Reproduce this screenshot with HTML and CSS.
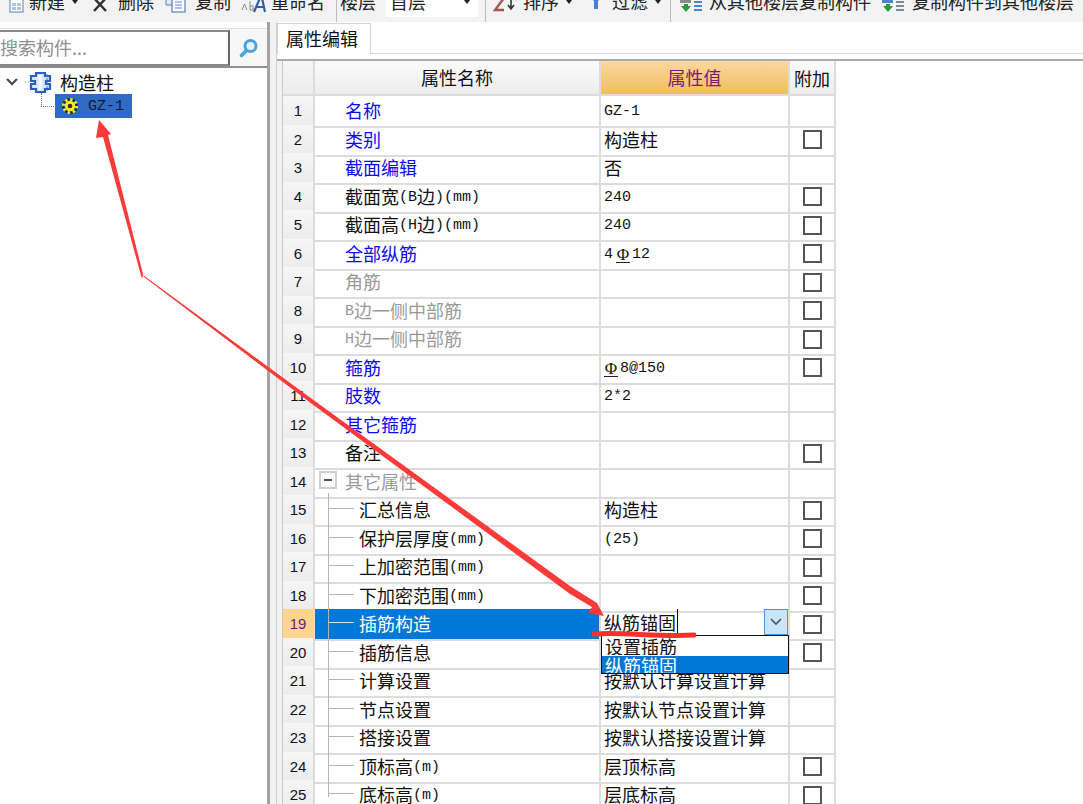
FILE: index.html
```html
<!DOCTYPE html>
<html lang="zh">
<head>
  <meta charset="UTF-8" />
  <title>属性编辑</title>
  <link rel="stylesheet" href="styles.css">
</head>
<body>
  <div class="toolbar">
    <div class="tb-item tb-new">
      <svg width="15" height="16" viewBox="0 0 15 16"><rect x="1" y="0" width="13" height="15" fill="#fff" stroke="#5b7fb5"/><rect x="3" y="6" width="9" height="7" fill="#a9c4e6"/><path d="M3 9.5H12M7.5 6V13" stroke="#fff"/></svg>
      <span>新建</span><i class="caret"></i>
    </div>
    <div class="tb-item tb-del">
      <svg width="18" height="16" viewBox="0 0 18 16"><path d="M2 0L15 14M16 0L3 14" stroke="#333" stroke-width="2.5"/></svg>
      <span>删除</span>
    </div>
    <div class="tb-item tb-copy">
      <svg width="21" height="16" viewBox="0 0 21 16"><path d="M1 0H10V8H1Z" fill="#dfe9f7" stroke="#5b7fb5"/><rect x="7" y="1" width="13" height="14" fill="#fff" stroke="#3c68a8"/><path d="M10 5H17M10 8H17M10 11H17" stroke="#5b86c6"/></svg>
      <span>复制</span>
    </div>
    <div class="tb-item tb-rename">
      <svg width="25" height="16" viewBox="0 0 25 16"><path d="M1 13L3.5 7L6 13M9 4V13H12V9H9" fill="none" stroke="#888"/><path d="M13 15L19 1H21L24 15M16 10H23" fill="none" stroke="#2b5fb0" stroke-width="2.2"/></svg>
      <span>重命名</span>
    </div>
    <i class="tb-sep tb-sep-rename"></i>
    <span class="tb-floor">楼层</span>
    <div class="tb-combo"><span>首层</span><i class="caret"></i></div>
    <i class="tb-sep tb-sep-combo"></i>
    <div class="tb-item tb-sort">
      <svg width="24" height="16" viewBox="0 0 24 16"><path d="M2 1H11L2 13H11" fill="none" stroke="#a65555" stroke-width="2.4"/><path d="M18 0V11M15 8L18 12L21 8" fill="none" stroke="#333" stroke-width="1.6"/></svg>
      <span>排序</span><i class="caret"></i>
    </div>
    <div class="tb-item tb-filter">
      <svg width="14" height="16" viewBox="0 0 14 16"><path d="M1 0H13L9 4V12H5V4Z" fill="#4b7fd0"/></svg>
      <span>过滤</span><i class="caret"></i>
    </div>
    <i class="tb-sep tb-sep-filter"></i>
    <div class="tb-item tb-from">
      <svg width="24" height="16" viewBox="0 0 24 16"><rect x="1" y="0" width="11" height="6" fill="#8a8a8a"/><path d="M5 7V9H2L7 15L12 9H9V7Z" fill="#2a9a3c"/><path d="M15 1H23M15 5H23M15 9H23M15 13H23" stroke="#4a86d0" stroke-width="2.2"/></svg>
      <span>从其他楼层复制构件</span>
    </div>
    <div class="tb-item tb-to">
      <svg width="24" height="16" viewBox="0 0 24 16"><rect x="1" y="0" width="11" height="6" fill="#4a86d0"/><path d="M5 7V9H2L7 15L12 9H9V7Z" fill="#2a9a3c"/><path d="M15 1H23M15 5H23M15 9H23M15 13H23" stroke="#808890" stroke-width="2.2"/></svg>
      <span>复制构件到其他楼层</span>
    </div>
  </div>

  <div class="main">
    <div class="left-panel">
      <div class="search-bar">
        <div class="search-input">搜索构件...</div>
        <div class="search-btn">
          <svg width="20" height="20" viewBox="0 0 20 20"><circle cx="11.5" cy="8" r="5.5" fill="#e8f4fc" stroke="#45a5dc" stroke-width="3"/><path d="M7.5 12.5L2.5 17.5" stroke="#45a5dc" stroke-width="3.5" stroke-linecap="round"/></svg>
        </div>
      </div>
      <div class="tree">
        <div class="tree-root">
          <svg width="56" height="24" viewBox="0 0 56 24">
            <path d="M7 9L12 14L17 9" fill="none" stroke="#444" stroke-width="2"/>
            <path d="M25 12H31" stroke="#999" stroke-dasharray="1 2"/>
            <path d="M36 3H45V6H50V11H46V14H50V19H45V22H36V19H31V14H35V11H31V6H36Z" fill="#d6e6fb" stroke="#2f5fc0" stroke-width="2.2"/>
            <path d="M40 5V20" stroke="#fff" stroke-width="3"/>
            <path d="M47 4V21" stroke="#5d6f8f" stroke-dasharray="2 2"/>
          </svg>
          <span>构造柱</span>
        </div>
        <div class="tree-leaf">
          <svg width="16" height="16" viewBox="0 0 16 16">
            <circle cx="8" cy="8" r="6.6" fill="none" stroke="#1c2430" stroke-width="2.8" stroke-dasharray="2 3.2" stroke-dashoffset="2.6"/>
            <circle cx="8" cy="8" r="6.6" fill="none" stroke="#f8ec1e" stroke-width="2.8" stroke-dasharray="2.2 3"/>
            <circle cx="8" cy="8" r="5.2" fill="#f8ec1e"/>
            <circle cx="8" cy="8" r="2.3" fill="#2c2f35"/>
          </svg>
          <span class="en">GZ-1</span>
        </div>
      </div>
    </div>
    <div class="splitter"></div>
    <div class="right-panel">
      <div class="tab-strip"><div class="tab">属性编辑</div></div>
      <div class="grid-wrap">
        <div class="grid">
          <div class="row head">
            <div class="num"></div>
            <div class="name">属性名称</div>
            <div class="val">属性值</div>
            <div class="add">附加</div>
          </div>
          <div class="row"><div class="num">1</div><div class="name blue">名称</div><div class="val"><span class="en">GZ-1</span></div><div class="add"></div></div>
          <div class="row"><div class="num">2</div><div class="name blue">类别</div><div class="val">构造柱</div><div class="add"><i class="check"></i></div></div>
          <div class="row"><div class="num">3</div><div class="name blue">截面编辑</div><div class="val">否</div><div class="add"></div></div>
          <div class="row"><div class="num">4</div><div class="name">截面宽<span class="en">(B</span>边<span class="en">)(mm)</span></div><div class="val"><span class="en">240</span></div><div class="add"><i class="check"></i></div></div>
          <div class="row"><div class="num">5</div><div class="name">截面高<span class="en">(H</span>边<span class="en">)(mm)</span></div><div class="val"><span class="en">240</span></div><div class="add"><i class="check"></i></div></div>
          <div class="row"><div class="num">6</div><div class="name blue">全部纵筋</div><div class="val"><span class="en">4</span><span class="rebar">Φ</span><span class="en">12</span></div><div class="add"><i class="check"></i></div></div>
          <div class="row"><div class="num">7</div><div class="name gray">角筋</div><div class="val"></div><div class="add"><i class="check"></i></div></div>
          <div class="row"><div class="num">8</div><div class="name gray"><span class="en">B</span>边一侧中部筋</div><div class="val"></div><div class="add"><i class="check"></i></div></div>
          <div class="row"><div class="num">9</div><div class="name gray"><span class="en">H</span>边一侧中部筋</div><div class="val"></div><div class="add"><i class="check"></i></div></div>
          <div class="row"><div class="num">10</div><div class="name blue">箍筋</div><div class="val"><span class="rebar">Φ</span><span class="en">8@150</span></div><div class="add"><i class="check"></i></div></div>
          <div class="row"><div class="num">11</div><div class="name blue">肢数</div><div class="val"><span class="en">2*2</span></div><div class="add"></div></div>
          <div class="row"><div class="num">12</div><div class="name blue">其它箍筋</div><div class="val"></div><div class="add"></div></div>
          <div class="row"><div class="num">13</div><div class="name">备注</div><div class="val"></div><div class="add"><i class="check"></i></div></div>
          <div class="row"><div class="num">14</div><div class="name gray group"><i class="minus"></i>其它属性</div><div class="val"></div><div class="add"></div></div>
          <div class="row"><div class="num">15</div><div class="name child">汇总信息</div><div class="val">构造柱</div><div class="add"><i class="check"></i></div></div>
          <div class="row"><div class="num">16</div><div class="name child">保护层厚度<span class="en">(mm)</span></div><div class="val"><span class="en">(25)</span></div><div class="add"><i class="check"></i></div></div>
          <div class="row"><div class="num">17</div><div class="name child">上加密范围<span class="en">(mm)</span></div><div class="val"></div><div class="add"><i class="check"></i></div></div>
          <div class="row"><div class="num">18</div><div class="name child">下加密范围<span class="en">(mm)</span></div><div class="val"></div><div class="add"><i class="check"></i></div></div>
          <div class="row active">
            <div class="num">19</div>
            <div class="name child">插筋构造</div>
            <div class="val"><span class="edit-text">纵筋锚固</span>
              <div class="drop-btn"><svg width="14" height="10" viewBox="0 0 14 10"><path d="M2 2L7 7L12 2" fill="none" stroke="#456" stroke-width="1.6"/></svg></div>
              <div class="drop-list">
                <div class="drop-item">设置插筋</div>
                <div class="drop-item selected">纵筋锚固</div>
              </div>
            </div>
            <div class="add"><i class="check"></i></div>
          </div>
          <div class="row"><div class="num">20</div><div class="name child">插筋信息</div><div class="val"></div><div class="add"><i class="check"></i></div></div>
          <div class="row"><div class="num">21</div><div class="name child">计算设置</div><div class="val">按默认计算设置计算</div><div class="add"></div></div>
          <div class="row"><div class="num">22</div><div class="name child">节点设置</div><div class="val">按默认节点设置计算</div><div class="add"></div></div>
          <div class="row"><div class="num">23</div><div class="name child">搭接设置</div><div class="val">按默认搭接设置计算</div><div class="add"></div></div>
          <div class="row"><div class="num">24</div><div class="name child">顶标高<span class="en">(m)</span></div><div class="val">层顶标高</div><div class="add"><i class="check"></i></div></div>
          <div class="row"><div class="num">25</div><div class="name child last">底标高<span class="en">(m)</span></div><div class="val">层底标高</div><div class="add"><i class="check"></i></div></div>
        </div>
      </div>
    </div>
  </div>

  <!-- annotation drawn over the screenshot -->
  <svg class="markup" width="1083" height="804" viewBox="0 0 1083 804">
    <path d="M99 120L111 134L108 135L143 274L142 279L103 137L96 138Z" fill="#fb3a3a"/>
    <path d="M143 275L310 397.5L570 586L597 603L604 616L588 613L592 607L570 594L310 402.5L144 277Z" fill="#fb3a3a"/>
    <path d="M594 634C620 632 660 637 694 635" fill="none" stroke="#fb2f2f" stroke-width="5" stroke-linecap="round"/>
  </svg>
</body>
</html>
```

FILE: styles.css
```css
html, body {
  margin: 0;
  padding: 0;
  height: 100%;
  overflow: hidden;
}

body {
  position: relative;
  background: #fff;
  font-family: "Noto Sans CJK SC", "Liberation Sans", sans-serif;
  font-size: 18px;
  color: #111;
}

.en {
  font-family: "Liberation Mono", "Noto Sans CJK SC", monospace;
  font-size: 15px;
  line-height: 1;
  vertical-align: 3px;
}

.rebar {
  display: inline-block;
  width: 14px;
  margin: 0 2px 0 3px;
  border-bottom: 1px solid #222;
  font-family: "Liberation Serif", serif;
  font-size: 17px;
  line-height: 15px;
  text-align: center;
  vertical-align: 1px;
}

.rebar:first-child {
  margin-left: 0;
}

/* toolbar, its text is cut by the top of the picture */
.toolbar {
  height: 22px;
  box-sizing: border-box;
  padding-bottom: 9px;
  background: #f3f3f3;
  display: flex;
  align-items: flex-end;
  overflow: hidden;
  font-size: 18px;
  line-height: 20px;
  color: #222;
}

.tb-item {
  display: flex;
  align-items: flex-end;
  gap: 4px;
  flex: none;
}

.tb-item svg {
  flex: none;
}

.tb-item span {
  margin-bottom: 2px;
}

.tb-new { margin-left: 9px; }
.tb-new span { margin-left: 1px; }
.tb-del { margin-left: 13px; }
.tb-del span { margin-left: 5px; }
.tb-copy { margin-left: 11px; }
.tb-copy span { margin-left: 5px; }
.tb-rename { margin-left: 10px; }
.tb-rename span { margin-left: 1px; }
.tb-sort { margin-left: 7px; }
.tb-sort span { margin-left: 2px; }
.tb-filter { margin-left: 17px; }
.tb-filter span { margin-left: 5px; }
.tb-from { margin-left: 8px; }
.tb-from span { margin-left: 2px; }
.tb-to { margin-left: 10px; }
.tb-to span { margin-left: 3px; }

.caret {
  width: 0;
  height: 0;
  margin: 0 0 9px 3px;
  border: 3px solid transparent;
  border-top: 4px solid #222;
  border-bottom: 0;
}

.tb-sep {
  width: 1px;
  height: 22px;
  margin-bottom: -9px;
  background: #bbb;
  flex: none;
}

.tb-sep-rename { margin-left: 11px; }
.tb-sep-combo { margin-left: 7px; }
.tb-sep-filter { margin-left: 9px; }

.tb-floor {
  margin: 0 0 2px 3px;
  flex: none;
}

.tb-combo {
  width: 92px;
  height: 30px;
  box-sizing: border-box;
  margin-left: 10px;
  margin-bottom: -4px;
  padding: 0 8px 6px 4px;
  background: #fff;
  display: flex;
  justify-content: space-between;
  align-items: flex-end;
  flex: none;
}

.tb-combo .caret {
  margin-bottom: 7px;
}

/* main area */
.main {
  display: flex;
  height: 782px;
}

.left-panel {
  width: 267px;
  flex: none;
  box-sizing: border-box;
  padding-top: 6px;
  background: #fff;
}

.search-bar {
  display: flex;
  height: 40px;
  box-sizing: border-box;
  padding-top: 1px;
  background: #f7f7f7;
  border-top: 1px solid #e2e2e2;
  border-bottom: 2px solid #8f8f8f;
}

.search-input {
  width: 232px;
  height: 36px;
  box-sizing: border-box;
  margin-left: -2px;
  border: 2px solid #8a8a8a;
  border-right-color: #666;
  background: #fff;
  color: #8f8f8f;
  font-size: 18px;
  line-height: 31px;
  flex: none;
}

.search-btn {
  width: 37px;
  display: flex;
  align-items: center;
  justify-content: center;
}

.tree {
  padding-top: 2px;
}

.tree-root {
  display: flex;
  align-items: center;
  height: 24px;
  gap: 4px;
}

.tree-leaf {
  position: relative;
  width: 77px;
  height: 24px;
  margin-left: 55px;
  box-sizing: border-box;
  padding-left: 7px;
  background: #2f6bc4;
  display: flex;
  align-items: center;
  gap: 10px;
  color: #0c1a33;
}

.tree-leaf::before {
  content: "";
  position: absolute;
  left: -14px;
  top: -1px;
  width: 14px;
  height: 13px;
  border-left: 1px dotted #777;
  border-bottom: 1px dotted #777;
}

.splitter {
  width: 9px;
  flex: none;
  box-sizing: border-box;
  background: #f2f2f2;
  border-left: 3px solid #a3a3a3;
}

.right-panel {
  flex: 1;
  min-width: 0;
  border-left: 1px solid #cfcfcf;
}

.tab-strip {
  height: 32px;
  box-sizing: border-box;
  padding-top: 1px;
  border-bottom: 1px solid #d5d5d5;
  display: flex;
}

.tab {
  width: 94px;
  height: 31px;
  box-sizing: border-box;
  padding-left: 8px;
  background: #fff;
  border: 1px solid #d5d5d5;
  border-bottom: 0;
  font-size: 18px;
  line-height: 28px;
}

/* property grid */
.grid-wrap {
  margin-top: 5px;
  border-top: 2px solid #ababab;
  padding-left: 5px;
  background: linear-gradient(to right, #f2f2f2 5px, #fff 5px);
}

.grid {
  width: 553px;
  border-left: 1px solid #c8c8c8;
}

.row {
  display: grid;
  grid-template-columns: 32px 286px 189px 46px;
  height: 28.5px;
}

.row > div {
  position: relative;
  box-sizing: border-box;
  border-right: 2px solid #dcdcdc;
  border-bottom: 2px solid #dcdcdc;
  line-height: 28px;
  white-space: nowrap;
}

.row > .num {
  background: linear-gradient(#f6f6f6, #ececec);
  font-family: "Liberation Sans", sans-serif;
  font-size: 15px;
  line-height: 30px;
  text-align: center;
}

.name {
  padding-left: 30px;
}

.val {
  padding-left: 3px;
}

.add {
  display: flex;
  align-items: center;
  justify-content: center;
}

.blue { color: #0a0af5; }
.gray { color: #9a9a9a; }

.head {
  height: 35px;
}

.head > div {
  background: linear-gradient(#fbfbfb, #ededed);
  line-height: 32px;
}

.head .name {
  padding: 0;
  text-align: center;
}

.head .val {
  padding: 0;
  text-align: center;
  color: #7a1a70;
  background: linear-gradient(#fbd89e, #f0bd60);
}

.check {
  display: block;
  width: 19px;
  height: 19px;
  box-sizing: border-box;
  border: 2px solid #555;
  background: #fff;
}

.minus {
  position: absolute;
  left: 4px;
  top: 4px;
  width: 18px;
  height: 18px;
  box-sizing: border-box;
  border: 2px solid #d0d0d0;
  background: linear-gradient(#555, #555) center / 8px 2px no-repeat;
}

.child {
  padding-left: 44px;
}

.child::before {
  content: "";
  position: absolute;
  left: 13px;
  top: -2px;
  bottom: -2px;
  width: 1px;
  background: #b5b5b5;
}

.child::after {
  content: "";
  position: absolute;
  left: 14px;
  top: 13px;
  width: 25px;
  height: 1px;
  background: #b5b5b5;
}

.child.last::before {
  bottom: 13px;
}

.row.active > .num {
  background: #fdd58e;
  color: #7a1a70;
}

.active .name {
  background: #0078d7;
  color: #fff;
}

.active .name::after {
  background: #cfe4f7;
}

.row.active > .val {
  line-height: 26px;
}

.edit-text {
  padding-right: 1px;
  border-right: 1px solid #111;
}

.drop-btn {
  position: absolute;
  top: 0;
  right: 0;
  width: 24px;
  height: 26px;
  box-sizing: border-box;
  background: #cce4f7;
  border: 1px solid #4f94d4;
  display: flex;
  align-items: center;
  justify-content: center;
}

.drop-list {
  position: absolute;
  z-index: 5;
  left: 0;
  top: 26px;
  width: 188px;
  height: 39px;
  box-sizing: border-box;
  border: 1px solid #111;
  background: #fff;
  overflow: hidden;
  line-height: 18px;
}

.drop-item {
  height: 18px;
  padding-left: 3px;
  margin-top: 1px;
  overflow: hidden;
}

.drop-item.selected {
  background: #0078d7;
  color: #fff;
}

.markup {
  position: absolute;
  z-index: 10;
  left: 0;
  top: 0;
  pointer-events: none;
}
```
